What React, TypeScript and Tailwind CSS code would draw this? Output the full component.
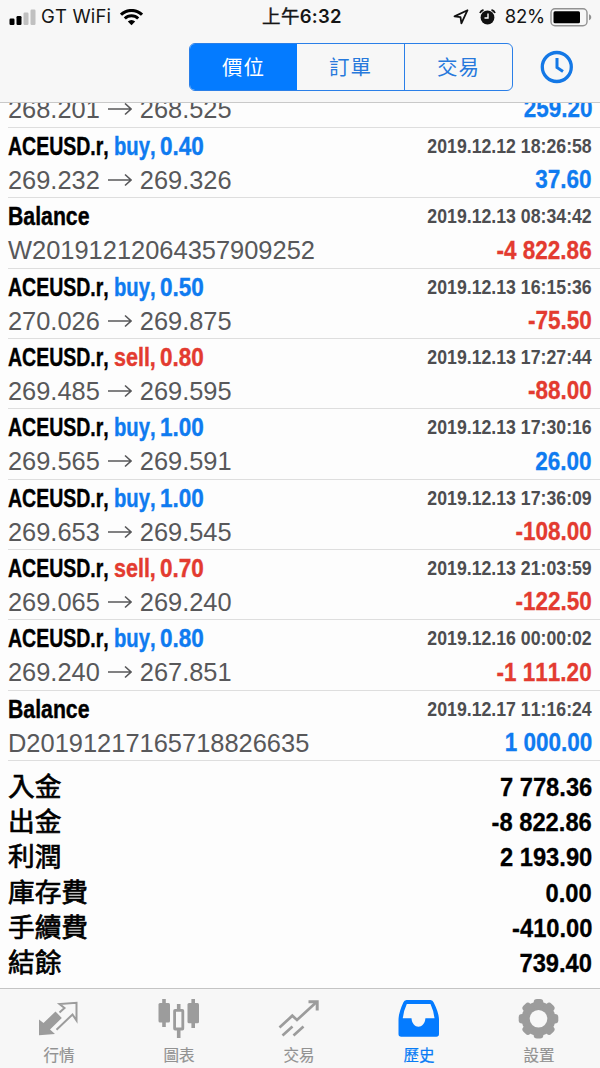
import React from "react";

type Entry = {
  side?: "buy" | "sell";
  volume?: string;
  time: string;
  from?: string;
  to?: string;
  note?: string;
  amount: string;
};

const entries: Entry[] = [
  { side: "buy", volume: "0.40", time: "2019.12.12 18:26:58", from: "269.232", to: "269.326", amount: "37.60" },
  { time: "2019.12.13 08:34:42", note: "W20191212064357909252", amount: "-4 822.86" },
  { side: "buy", volume: "0.50", time: "2019.12.13 16:15:36", from: "270.026", to: "269.875", amount: "-75.50" },
  { side: "sell", volume: "0.80", time: "2019.12.13 17:27:44", from: "269.485", to: "269.595", amount: "-88.00" },
  { side: "buy", volume: "1.00", time: "2019.12.13 17:30:16", from: "269.565", to: "269.591", amount: "26.00" },
  { side: "buy", volume: "1.00", time: "2019.12.13 17:36:09", from: "269.653", to: "269.545", amount: "-108.00" },
  { side: "sell", volume: "0.70", time: "2019.12.13 21:03:59", from: "269.065", to: "269.240", amount: "-122.50" },
  { side: "buy", volume: "0.80", time: "2019.12.16 00:00:02", from: "269.240", to: "267.851", amount: "-1 111.20" },
  { time: "2019.12.17 11:16:24", note: "D20191217165718826635", amount: "1 000.00" },
];

const summary = [
  ["入金", "7 778.36"],
  ["出金", "-8 822.86"],
  ["利潤", "2 193.90"],
  ["庫存費", "0.00"],
  ["手續費", "-410.00"],
  ["結餘", "739.40"],
];

const gearAngles = [0, 45, 90, 135, 180, 225, 270, 315];

function Details({ from, to, note, amount }: { from?: string; to?: string; note?: string; amount: string }) {
  const amountColor = amount.startsWith("-") ? "text-[#e33b30]" : "text-[#0f7bf0]";
  return (
    <div className="flex h-[36px] items-center justify-between whitespace-nowrap">
      {note ? (
        <span className="text-[25.45px] text-[#58585a]">{note}</span>
      ) : (
        <div className="flex items-center text-[25.4px] text-[#58585a]">
          <span>{from}</span>
          <svg className="mx-[8px]" width="24" height="14" viewBox="0 0 24 14" fill="none" stroke="currentColor" strokeWidth="1.6"><path d="M0 7h23M17 1.5 23 7 17 12.5" /></svg>
          <span>{to}</span>
        </div>
      )}
      <span className={`inline-block origin-right scale-x-[0.9] text-[25px] font-bold [-webkit-text-stroke:0.3px_currentColor] ${amountColor}`}>{amount}</span>
    </div>
  );
}

function Row({ entry }: { entry: Entry }) {
  const sideColor = entry.side === "sell" ? "text-[#e33b30]" : "text-[#0f7bf0]";
  return (
    <div className="ml-2 h-[70.35px] shrink-0 border-b border-[#dedede] pr-2 pt-[3px]">
      <div className="flex h-[31px] items-start justify-between whitespace-nowrap font-bold">
        <div className="flex text-[25px] leading-[30px] [-webkit-text-stroke:0.4px_currentColor]">
          {entry.side ? (
            <>
              <span className="w-[106px] text-black"><span className="inline-block origin-left scale-x-[0.78]">ACEUSD.r,</span></span>
              <span className={`w-[46px] ${sideColor}`}>
                <span className={`inline-block origin-left ${entry.side === "buy" ? "scale-x-[0.81]" : "scale-x-[0.86]"}`}>{entry.side},</span>
              </span>
              <span className={sideColor}><span className="inline-block origin-left scale-x-[0.9]">{entry.volume}</span></span>
            </>
          ) : (
            <span className="inline-block origin-left scale-x-[0.85] text-black">Balance</span>
          )}
        </div>
        <span className="inline-block origin-right scale-x-[0.885] text-[20px] leading-[30px] text-[#4d4d50]">{entry.time}</span>
      </div>
      <Details from={entry.from} to={entry.to} note={entry.note} amount={entry.amount} />
    </div>
  );
}

function Tab({ label, active, children }: { label: string; active?: boolean; children: React.ReactNode }) {
  return (
    <div className={`flex w-[120px] flex-col items-center pt-[9px] ${active ? "text-[#087cf5]" : "text-[#929292]"}`}>
      <svg width="42" height="42" viewBox="0 0 42 42" fill="none" stroke="#9c9c9c">{children}</svg>
      <span className="mt-[4px] text-[15.5px] leading-[24px] [-webkit-text-stroke:0.2px_currentColor]">{label}</span>
    </div>
  );
}

export default function App() {
  return (
    <div className="flex h-[1068px] w-[600px] flex-col overflow-hidden bg-[#fdfdfd] font-['Liberation_Sans','Noto_Sans_CJK_TC',sans-serif] [font-kerning:none]">
      <header className="z-10 h-[103px] shrink-0 border-b border-[#c9c9c9] bg-[#f7f7f7]">
        <div className="grid h-[34px] grid-cols-3 items-center font-['Inter','Noto_Sans_CJK_TC',sans-serif] text-[18.5px] text-[#151515]">
          <div className="flex items-center pl-[9px]">
            <svg width="27" height="17" viewBox="0 0 27 17">
              <rect x="0.5" y="9.500" width="5" height="6.5" rx="1.2" fill="#000" />
              <rect x="7.5" y="7" width="5" height="9" rx="1.2" fill="#000" />
              <rect x="14.5" y="3.500" width="5" height="12.5" rx="1.2" fill="#c0c0c0" />
              <rect x="21.5" y="0.500" width="5" height="15.5" rx="1.2" fill="#c0c0c0" />
            </svg>
            <span className="ml-[5px] whitespace-nowrap tracking-[0.15px]">GT WiFi</span>
            <svg className="ml-[9px]" width="23" height="17" viewBox="0 0 23 17" fill="none" stroke="#000" strokeWidth="3">
              <path d="M1 5.700a15 15 0 0 1 21 0M4.8 9.500a9.5 9.5 0 0 1 13.4 0" />
              <path d="M7.8 12.500a5.2 5.2 0 0 1 7.4 0L11.5 16.2Z" fill="#000" stroke="none" />
            </svg>
          </div>
          <div className="whitespace-nowrap pl-[4px] text-center font-semibold tracking-[0.3px]"><span className="text-[18.5px] font-normal [-webkit-text-stroke:0.4px_#151515]">上午</span>6:32</div>
          <div className="flex items-center justify-end pr-[8px]">
            <svg width="16" height="16" viewBox="0 0 16 16" fill="none" stroke="#111" strokeWidth="1.8" strokeLinejoin="round"><path d="M14.5 1.2 1.5 7.4l6 .8.9 6.2Z" /></svg>
            <svg className="ml-[10px]" width="17" height="17" viewBox="0 0 17 17">
              <circle cx="8.5" cy="8.500" r="6.9" fill="#111" />
              <path d="M1 4a5 5 0 0 1 3.5-3M16 4a5 5 0 0 0-3.500-3" fill="none" stroke="#111" strokeWidth="1.800" />
              <path d="M9 4.500v4.500H5.500" fill="none" stroke="#fff" strokeWidth="1.400" />
            </svg>
            <span className="ml-[9px] tracking-[-0.2px]">82%</span>
            <svg className="ml-[5px]" width="42" height="19" viewBox="0 0 42 19">
              <rect x="1" y="0.800" width="36" height="17" rx="4" fill="none" stroke="#929292" strokeWidth="1.4" />
              <rect x="3.500" y="3.300" width="26.500" height="12" rx="1.500" fill="#000" />
              <path d="M39 6.300c3 1.200 3 4.800 0 6Z" fill="#929292" />
            </svg>
          </div>
        </div>
        <div className="flex items-center pl-[189px] pt-[9px]">
          <div className="flex h-[48px] w-[324px] overflow-hidden rounded-[6px] border-[1.5px] border-[#2a7fe8] text-[20.5px] tracking-[1px] text-[#2779dc]">
            <div className="flex flex-1 items-center justify-center bg-[#047bff] pt-[2px] text-white">價位</div>
            <div className="flex flex-1 items-center justify-center border-r-[1.5px] border-[#2a7fe8] pt-[2px]">訂單</div>
            <div className="flex flex-1 items-center justify-center pt-[2px]">交易</div>
          </div>
          <svg className="ml-[27px]" width="34" height="34" viewBox="0 0 34 34" fill="none" stroke="#1478e6" strokeWidth="3.300"><circle cx="16.800" cy="17" r="14.500" /><path d="M17 8v9.500l6 4" strokeWidth="3" /></svg>
        </div>
      </header>

      <main className="flex min-h-0 flex-1 flex-col">
        <section className="flex h-[658px] shrink-0 flex-col justify-end overflow-hidden">
          <div className="ml-2 flex h-[25px] shrink-0 flex-col justify-end border-b border-[#dedede] pr-2">
            <Details from="268.201" to="268.525" amount="259.20" />
          </div>
          {entries.map((entry) => <Row key={entry.time} entry={entry} />)}
        </section>
        <section className="flex flex-col px-2 pt-[8px]">
          {summary.map(([label, value]) => (
            <div key={label} className="flex h-[35.2px] items-center justify-between whitespace-nowrap text-black">
              <span className="pt-[2px] text-[26.7px] leading-[35px] [-webkit-text-stroke:0.7px_#000]">{label}</span>
              <span className="inline-block origin-right scale-x-[0.93] pt-px text-[25.500px] font-bold [-webkit-text-stroke:0.3px_#000]">{value}</span>
            </div>
          ))}
        </section>
      </main>

      <nav className="-ml-px flex h-[80px] w-[601px] shrink-0 border-t border-[#c4c4c4] bg-[#f7f7f7]">
        <Tab label="行情">
          <path fill="#9c9c9c" stroke="none" d="M1 21.500 5.500 25 17.500 13.500 23.800 20 12 31.500 17 36 1 37.200Z" />
          <path d="M18.500 31.800 34.500 16.500 38.500 22.500V4.800L21.500 6 26.500 10 21.500 14.500" strokeWidth="2" />
        </Tab>
        <Tab label="圖表">
          <path d="M6 1v28M35.200 1v29M20.700 6v6M20.700 32v8" strokeWidth="3.600" />
          <rect x="0.500" y="5" width="11.500" height="19.500" rx="1.500" fill="#9c9c9c" stroke="none" />
          <rect x="29.500" y="5" width="11.500" height="20.300" rx="1.500" fill="#9c9c9c" stroke="none" />
          <rect x="16.600" y="12.300" width="8.200" height="18.700" rx="0.500" strokeWidth="2.800" />
        </Tab>
        <Tab label="交易">
          <g strokeWidth="2.700">
            <path d="M1.500 29.500 14.300 17.700 19 22 38 4.500" />
            <path d="M4.500 37.500 14.500 28.500M15.500 37.500 25.500 28.500" />
            <path d="M30.500 3.700H39.200V12.500" strokeWidth="3" />
          </g>
        </Tab>
        <Tab label="歷史" active>
          <path fill="#047bff" fillRule="evenodd" stroke="none" d="M8.500 2h24q2.300 0 3.200 2.500Q41 15 41 22v14q0 2.700-2.700 2.700H3.200Q.5 38.700.5 36V22Q.5 15 5.300 4.500 6.200 2 8.500 2ZM8.800 6Q5.500 13 4.800 20.300H13.500C14.300 31.500 26.600 31.500 27.400 20.300H36.500Q35.800 13 32.500 6Z" />
        </Tab>
        <Tab label="設置">
          <g fill="#9c9c9c" stroke="none">
            <circle cx="20.500" cy="20.700" r="17" />
            {gearAngles.map((angle) => (
              <rect key={angle} x="15.700" y="0.900" width="9.600" height="10" rx="3.300" transform={`rotate(${angle} 20.500 20.700)`} />
            ))}
          </g>
          <circle cx="20.500" cy="20.700" r="8.800" fill="#f7f7f7" stroke="none" />
        </Tab>
      </nav>
    </div>
  );
}
